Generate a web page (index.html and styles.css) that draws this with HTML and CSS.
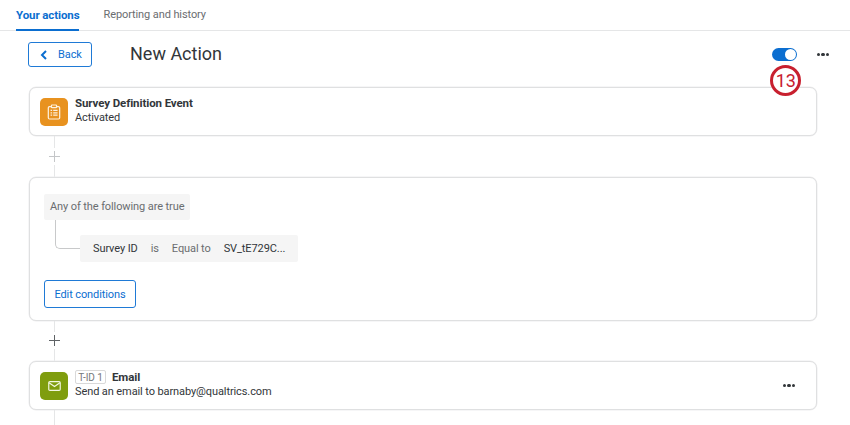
FILE: index.html
```html
<!DOCTYPE html>
<html lang="en">
<head>
<meta charset="utf-8">
<title>New Action</title>
<link rel="stylesheet" href="styles.css">
</head>
<body>
<nav class="tabs">
  <a class="tab tab-active">Your actions</a>
  <a class="tab">Reporting and history</a>
</nav>
<main class="page">
  <header class="head">
    <button class="btn btn-back">
      <svg class="chev" width="8" height="10" viewBox="0 0 8 10"><path d="M6 1 L2 5 L6 9" fill="none" stroke="#0b6ed0" stroke-width="2"/></svg>
      <span>Back</span>
    </button>
    <h1 class="title">New Action</h1>
    <div class="head-right">
      <span class="toggle"><span class="knob"></span></span>
      <span class="dots"><i></i><i></i><i></i></span>
      <span class="step-badge">13</span>
    </div>
  </header>

  <section class="card card-row">
    <span class="ico ico-orange">
      <svg width="14" height="16" viewBox="0 0 18 20" fill="none" stroke="#fdf0dc" stroke-width="1.6">
        <rect x="1.7" y="3" width="14.6" height="16" rx="1.5"/>
        <rect x="5.7" y="1" width="6.6" height="3.4" rx=".8" fill="#e8921f"/>
        <path d="M4.6 8h2M8 8h5.6M4.6 11h2M8 11h5.6M4.6 14h2M8 14h5.6"/>
      </svg>
    </span>
    <div class="card-text">
      <div class="line1"><strong>Survey Definition Event</strong></div>
      <div class="line2">Activated</div>
    </div>
  </section>

  <div class="connector connector-faint">
    <svg class="plus" width="11" height="11" viewBox="0 0 11 11"><path d="M5.5 0v11M0 5.5h11" stroke="#c4c6c8" stroke-width="1"/></svg>
  </div>

  <section class="card card-cond">
    <div class="cond-head">Any of the following are true</div>
    <div class="cond-row">
      <span class="elbow"></span>
      <div class="cond-body">
        <span class="c-dark">Survey ID</span>
        <span class="c-grey">is</span>
        <span class="c-grey">Equal to</span>
        <span class="c-dark">SV_tE729C...</span>
      </div>
    </div>
    <button class="btn btn-edit">Edit conditions</button>
  </section>

  <div class="connector connector-short">
    <svg class="plus plus-up" width="11" height="11" viewBox="0 0 11 11"><path d="M5.5 0v11M0 5.5h11" stroke="#5f6366" stroke-width="1"/></svg>
  </div>

  <section class="card card-row">
    <span class="ico ico-green">
      <svg width="13" height="10" viewBox="0 0 14 11" fill="none" stroke="#f2f6e0" stroke-width="1.3">
        <rect x=".7" y=".7" width="12.6" height="9.6" rx="1.2"/>
        <path d="M1 2l6 4 6-4"/>
      </svg>
    </span>
    <div class="card-text">
      <div class="line1"><span class="tid">T-ID 1</span><strong>Email</strong></div>
      <div class="line2">Send an email to barnaby@qualtrics.com</div>
    </div>
    <span class="dots dots-card"><i></i><i></i><i></i></span>
  </section>
  <div class="tail"></div>
</main>
</body>
</html>
```
FILE: styles.css
```css
* { box-sizing: border-box; }
html, body { margin: 0; padding: 0; }
body {
  width: 850px;
  height: 425px;
  overflow: hidden;
  background: #fff;
  color: #32363a;
  font-family: "Roboto", "Open Sans", sans-serif;
  font-size: 11px;
  letter-spacing: -.1px;
}
.tabs {
  display: flex;
  gap: 24px;
  height: 31px;
  padding-left: 16px;
  border-bottom: 1px solid #e5e6e7;
}
.tab {
  height: 31px;
  padding-top: 7px;
  line-height: 16px;
  font-size: 11px;
  color: #6a6d70;
}
.tab-active {
  color: #0b6ed0;
  font-size: 11.5px;
  font-weight: 700;
  border-bottom: 2px solid #0b6ed0;
}
.page { padding-left: 28px; width: 817px; }
.head {
  display: flex;
  align-items: center;
  height: 25px;
  margin-top: 11px;
}
.btn {
  font-family: inherit;
  font-size: 11px;
  letter-spacing: inherit;
  color: #0b6ed0;
  background: #fff;
  border: 1px solid #1f7ad6;
  border-radius: 3px;
  padding: 0;
  cursor: pointer;
}
.btn-back {
  display: flex;
  align-items: center;
  width: 64px;
  height: 25px;
  padding-left: 11px;
  gap: 10px;
}
.title {
  margin: -2px 0 0 38px;
  font-size: 18px;
  font-weight: 400;
  letter-spacing: 0;
  color: #32363a;
}
.head-right {
  position: relative;
  display: flex;
  align-items: center;
  margin-left: auto;
  margin-right: -12px;
  gap: 20px;
}
.toggle {
  display: block;
  width: 25px;
  height: 13px;
  padding: 1px;
  border-radius: 7px;
  background: #0b6ed0;
}
.knob {
  display: block;
  width: 11px;
  height: 11px;
  margin-left: 12px;
  border-radius: 50%;
  background: #fff;
}
.dots { display: flex; gap: 1px; }
.dots i {
  display: block;
  width: 3.4px;
  height: 3.4px;
  border-radius: 50%;
  background: #32363a;
}
.step-badge {
  position: absolute;
  z-index: 2;
  left: -1.5px;
  top: 17px;
  width: 31px;
  height: 31px;
  border: 3px solid #c8202f;
  border-radius: 50%;
  background: #fff;
  color: #c8202f;
  font-size: 18px;
  font-weight: 400;
  letter-spacing: 0;
  line-height: 25px;
  text-align: center;
}
.card {
  border: 1px solid #dfe0e1;
  border-radius: 7px;
  background: #fff;
  margin-left: 1px;
  box-shadow: 0 0 0 .5px #eeeeef;
}
.card-row {
  display: flex;
  align-items: center;
  height: 49px;
  padding-left: 10px;
}
.head + .card { margin-top: 20px; }
.ico {
  display: flex;
  align-items: center;
  justify-content: center;
  flex: none;
  width: 28px;
  height: 28px;
  border-radius: 5px;
}
.ico-orange { background: #e8921f; }
.ico-green { background: #7f9d0e; }
.card-text { margin-left: 7px; line-height: 14px; margin-top: -3px; }
.line1 { display: flex; align-items: center; margin-bottom: 1px; font-size: 11.5px; }
.line1 strong { color: #32363a; font-weight: 700; }
.line2 { font-size: 11px; color: #32363a; }
.tid {
  display: inline-block;
  width: 31px;
  height: 14px;
  margin-right: 6px;
  border: 1px solid #d9d9d9;
  border-radius: 2px;
  font-size: 10px;
  line-height: 13px;
  text-align: center;
  color: #74777a;
}
.dots-card {
  margin-left: auto;
  margin-right: 21px;
}
.connector {
  display: flex;
  align-items: center;
  justify-content: center;
  width: 11px;
  height: 41px;
  margin-left: 21px;
  background: linear-gradient(#e5e6e7, #e5e6e7) center / 1px 100% no-repeat;
}
.connector-short { height: 40px; }
.plus { background: #fff; box-shadow: 0 0 0 3px #fff; }
.plus-up { margin-top: -2px; }
.card-cond {
  height: 144px;
  padding: 16px 14px 0;
}
.cond-head {
  display: inline-block;
  height: 26px;
  padding: 0 6px;
  line-height: 26px;
  color: #6a6d70;
  background: #f5f5f5;
  border-radius: 2px;
  vertical-align: top;
}
.cond-row { display: flex; height: 41px; }
.elbow {
  width: 25px;
  height: 29px;
  margin-left: 11px;
  border-left: 1px solid #c8c9ca;
  border-bottom: 1px solid #c8c9ca;
  border-bottom-left-radius: 5px;
}
.cond-body {
  display: flex;
  align-items: center;
  gap: 13px;
  height: 27px;
  margin-top: 15px;
  padding: 0 13px;
  background: #f5f5f5;
  border-radius: 2px;
  white-space: nowrap;
}
.c-dark { color: #32363a; }
.c-grey { color: #6a6d70; }
.btn-edit {
  display: block;
  width: 92px;
  height: 28px;
  margin-top: 19px;
}
.tail {
  width: 1px;
  height: 16px;
  margin-left: 26px;
  background: #e5e6e7;
}
```
